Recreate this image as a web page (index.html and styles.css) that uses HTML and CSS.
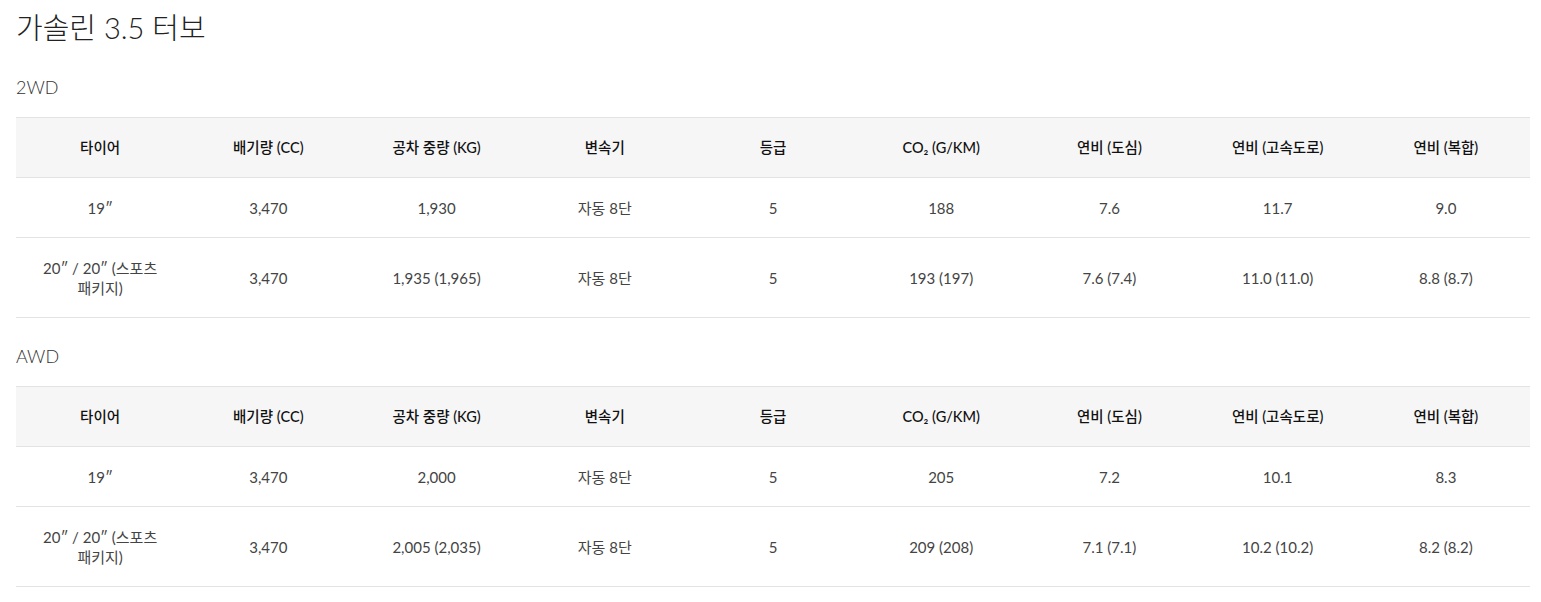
FILE: index.html
```html
<!DOCTYPE html>
<html lang="ko">
<head>
<meta charset="utf-8">
<link rel="stylesheet" href="styles.css">
</head>
<body>
<main class="page">
  <h1 class="title">가솔린 3.5 터보</h1>

  <h2 class="section">2WD</h2>
  <table class="spec">
    <thead>
      <tr class="head">
        <th>타이어</th><th>배기량 (CC)</th><th>공차 중량 (KG)</th><th>변속기</th><th>등급</th><th>CO₂ (G/KM)</th><th>연비 (도심)</th><th>연비 (고속도로)</th><th>연비 (복합)</th>
      </tr>
    </thead>
    <tbody>
      <tr class="row">
        <td>19″</td><td>3,470</td><td>1,930</td><td>자동 8단</td><td>5</td><td>188</td><td>7.6</td><td>11.7</td><td>9.0</td>
      </tr>
      <tr class="row tall">
        <td>20″ / 20″ (스포츠 패키지)</td><td>3,470</td><td>1,935 (1,965)</td><td>자동 8단</td><td>5</td><td>193 (197)</td><td>7.6 (7.4)</td><td>11.0 (11.0)</td><td>8.8 (8.7)</td>
      </tr>
    </tbody>
  </table>

  <h2 class="section second">AWD</h2>
  <table class="spec">
    <thead>
      <tr class="head">
        <th>타이어</th><th>배기량 (CC)</th><th>공차 중량 (KG)</th><th>변속기</th><th>등급</th><th>CO₂ (G/KM)</th><th>연비 (도심)</th><th>연비 (고속도로)</th><th>연비 (복합)</th>
      </tr>
    </thead>
    <tbody>
      <tr class="row">
        <td>19″</td><td>3,470</td><td>2,000</td><td>자동 8단</td><td>5</td><td>205</td><td>7.2</td><td>10.1</td><td>8.3</td>
      </tr>
      <tr class="row tall">
        <td>20″ / 20″ (스포츠 패키지)</td><td>3,470</td><td>2,005 (2,035)</td><td>자동 8단</td><td>5</td><td>209 (208)</td><td>7.1 (7.1)</td><td>10.2 (10.2)</td><td>8.2 (8.2)</td>
      </tr>
    </tbody>
  </table>
</main>
</body>
</html>
```
FILE: styles.css
```css
html, body {
  margin: 0;
  padding: 0;
  background: #ffffff;
}

body {
  font-family: Lato, "Noto Sans CJK KR", sans-serif;
  color: #333333;
}

.page {
  padding: 0 11px 0 16px;
}

.title {
  margin: 10px 0 0;
  font-size: 29px;
  line-height: 36px;
  font-weight: 300;
  color: #222222;
}

.section {
  margin: 28px 0 0;
  font-size: 18px;
  line-height: 26px;
  font-weight: 300;
  color: #333333;
}

.section.second {
  margin-top: 25px;
}

.spec {
  width: 100%;
  margin-top: 17px;
  border-collapse: collapse;
  table-layout: fixed;
}

.spec th,
.spec td {
  text-align: center;
  vertical-align: middle;
  padding: 0 20px;
  line-height: 20px;
  word-break: keep-all;
}

.head {
  background: #f6f6f6;
  border-top: 1px solid #e3e3e3;
  border-bottom: 1px solid #e3e3e3;
  height: 60px;
}

.head th {
  font-size: 14.5px;
  font-weight: 500;
  color: #111111;
}

.row {
  height: 60px;
  border-bottom: 1px solid #e3e3e3;
}

.row td {
  font-size: 15px;
  font-weight: 400;
  color: #444444;
}

.row.tall {
  height: 80px;
}
```
